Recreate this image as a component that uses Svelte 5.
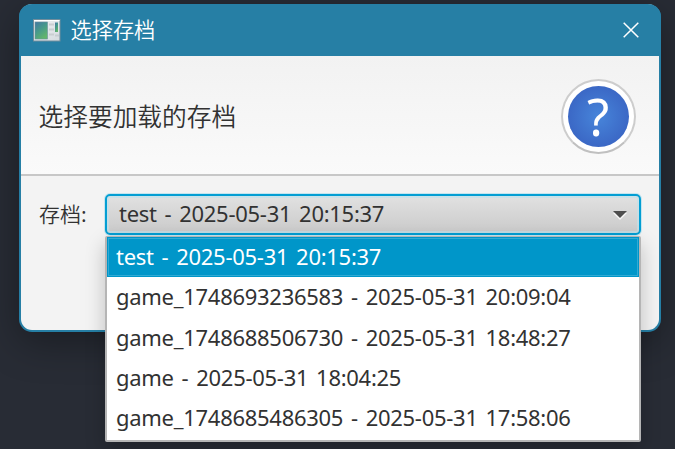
<script>
  const saves = [
    'test - 2025-05-31 20:15:37',
    'game_1748693236583 - 2025-05-31 20:09:04',
    'game_1748688506730 - 2025-05-31 18:48:27',
    'game - 2025-05-31 18:04:25',
    'game_1748685486305 - 2025-05-31 17:58:06'
  ];
  let selected = $state(0);
</script>

<main>
  <section class="dialog">
    <header class="titlebar">
      <svg class="app" width="28" height="23" viewBox="0 0 28 23">
        <defs>
          <linearGradient id="pane" x1="0" y1="0" x2="0.6" y2="1">
            <stop offset="0" stop-color="#4277a4" />
            <stop offset="0.5" stop-color="#47998b" />
            <stop offset="1" stop-color="#62b56b" />
          </linearGradient>
          <linearGradient id="shell" x1="0" y1="0" x2="1" y2="1">
            <stop offset="0" stop-color="#f2f3f4" />
            <stop offset="1" stop-color="#d5dbe0" />
          </linearGradient>
        </defs>
        <rect x="0.5" y="0.5" width="26.5" height="21.5" fill="url(#shell)" stroke="#718d9c" />
        <path d="M1 1.5H26.5" stroke="#fff" />
        <rect x="2" y="3" width="12.5" height="17" fill="url(#pane)" stroke="#6a929e" stroke-width=".6" />
        <path d="M16 5.5h5M16 10.5h5M16 15.5h5" stroke="#c9ced1" stroke-width="2" />
        <rect x="22" y="3.5" width="3" height="9.5" fill="url(#pane)" />
        <path d="M22 16.5h4" stroke="#c5ccd1" stroke-width="2" />
      </svg>
      <h1>选择存档</h1>
      <button class="close" aria-label="关闭">
        <svg width="16" height="16" viewBox="0 0 16 16"><path d="M.7.7 15.3 15.3M15.3.7.7 15.3" stroke="#fff" stroke-width="1.5" /></svg>
      </button>
    </header>
    <div class="banner">
      <h2>选择要加载的存档</h2>
      <div class="badge"><div class="disc"><span>?</span></div></div>
    </div>
    <div class="content">
      <span class="label">存档:</span>
      <div class="combo">
        <span class="value">{saves[selected]}</span>
        <svg class="arrow" width="14" height="9" viewBox="0 0 14 9"><path d="M0 2h14L7 9z" fill="#fff" opacity=".8" /><path d="M0 0h14L7 7z" fill="#4e4e4e" /></svg>
        <ul class="menu">
          {#each saves as save, i}
            <li class:active={i === selected}><button onclick={() => (selected = i)}>{save}</button></li>
          {/each}
        </ul>
      </div>
    </div>
  </section>
</main>

<style>
  :global(body) { margin: 0; }
  main {
    box-sizing: border-box;
    width: 675px;
    height: 449px;
    padding: 4px 14px 0 19px;
    overflow: hidden;
    background: #282c35;
    font-family: "Noto Sans", "Noto Sans CJK SC", sans-serif;
    color: #323232;
  }
  .dialog {
    box-sizing: border-box;
    height: 328px;
    border: 2px solid #267fa5;
    border-top: 0;
    border-radius: 13px;
    background: #f3f3f3;
    box-shadow: 0 10px 38px rgba(0, 0, 0, 0.35);
  }
  .titlebar {
    display: flex;
    align-items: center;
    box-sizing: border-box;
    height: 52px;
    margin: 0 -2px;
    padding: 0 22.5px 0 14px;
    border-radius: 13px 13px 0 0;
    background: #267fa5;
    color: #fff;
  }
  h1, h2 { margin: 0; white-space: nowrap; }
  h1, h2, .label { font-family: "Noto Sans CJK SC", sans-serif; font-weight: 350; }
  h1 { margin-left: 9.5px; padding-bottom: 2px; font-size: 21.2px; line-height: 50px; }
  button { border: 0; padding: 0; background: none; color: inherit; font: inherit; letter-spacing: inherit; word-spacing: inherit; }
  .close { margin-left: auto; display: flex; }
  .banner {
    display: flex;
    align-items: center;
    justify-content: space-between;
    box-sizing: border-box;
    height: 120px;
    padding: 0 23.5px 0 17.6px;
    border-bottom: 2px solid #c7c7c7;
    background: linear-gradient(#f2f2f2, #fafafa);
  }
  h2 { font-size: 24.7px; line-height: 36px; }
  .badge {
    display: grid;
    place-items: center;
    box-sizing: border-box;
    width: 75px;
    height: 75px;
    margin-top: 2px;
    border: 2px solid #cdcdcd;
    border-bottom-color: #c0c0c0;
    border-radius: 50%;
    background: #fff;
  }
  .disc {
    width: 61px;
    height: 61px;
    border-radius: 50%;
    background: radial-gradient(circle, #4785da 0%, #3c6ac7 65%, #365fbe 100%);
    text-align: center;
  }
  .disc span { font-size: 51px; line-height: 61px; color: #fff; display: block; }
  .content { display: flex; align-items: flex-start; padding: 18px 18px 0 18px; }
  .label { width: 67px; flex: none; font-size: 21px; line-height: 38px; }
  .combo {
    position: relative;
    display: flex;
    align-items: center;
    flex: 1;
    box-sizing: border-box;
    height: 41px;
    margin-left: -1px;
    padding: 0 12px;
    border: 2px solid #039ed3;
    border-radius: 5px;
    background: linear-gradient(#e1e1e1, #cacaca);
    box-shadow: 0 0 0 1px #c4e5ef, inset 0 0 0 2px rgba(190, 226, 237, 0.65);
    font-size: 22px;
    letter-spacing: -0.28px;
    word-spacing: 2.4px;
    white-space: nowrap;
  }
  .value { flex: 1; line-height: 36px; padding-bottom: 3px; }
  .arrow { margin-top: 2px; }
  .menu {
    position: absolute;
    top: 40px;
    left: -2px;
    right: -2px;
    box-sizing: border-box;
    height: 206px;
    margin: 0;
    padding: 0;
    list-style: none;
    background: #fff;
    border: 2px solid #b5b5b5;
    border-top: 1px solid #b5b5b5;
    border-radius: 2px;
    box-shadow: 0 8px 20px rgba(0, 0, 0, 0.22);
  }
  .menu li { height: 40.3px; }
  .menu button {
    box-sizing: border-box;
    width: 100%;
    height: 40px;
    padding: 0 9px;
    text-align: left;
    line-height: 38px;
    padding-bottom: 2px;
    display: block;
  }
  .active { background: #0096c9; color: #fff; box-shadow: inset 0 0 0 1px #0096c9, inset 0 0 0 2px #30aad4; }
</style>
